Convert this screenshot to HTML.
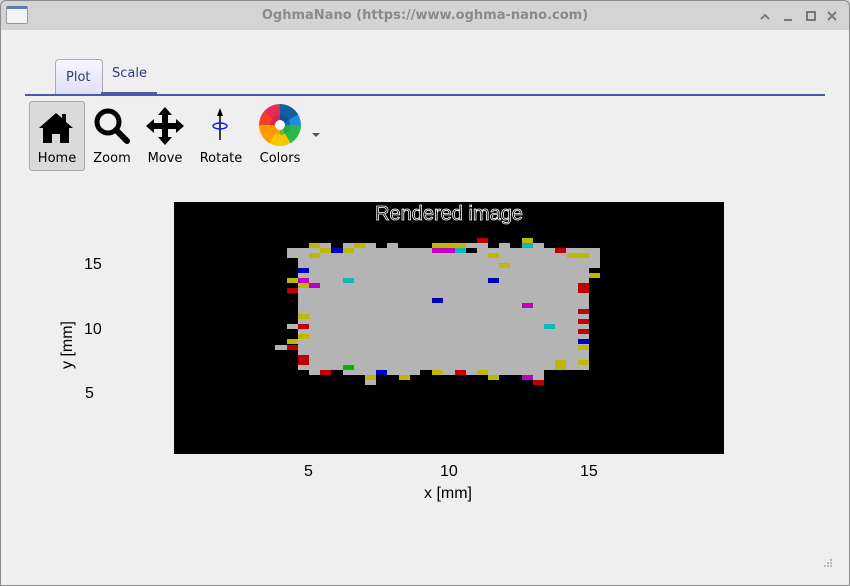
<!DOCTYPE html>
<html><head><meta charset="utf-8"><style>
body{margin:0;width:850px;height:586px;background:#fff;font-family:"DejaVu Sans","Liberation Sans",sans-serif;position:relative;overflow:hidden}
.win{position:absolute;left:0;top:0;width:850px;height:586px;background:#efefef;overflow:hidden}
.frame{position:absolute;left:0;top:0;width:848px;height:584px;border:1px solid #8a8a8a;border-radius:6px 6px 0 0}
.tb{position:absolute;left:0;top:0;width:100%;height:30px;background:#d4d4d4}
.a{position:absolute}
.b{position:absolute;height:5px}
.lbl{position:absolute;font-family:"Liberation Sans",sans-serif;font-size:16px;color:#000}
.tl{position:absolute;font-size:13px;color:#000;text-align:center}
</style></head><body>
<div class="win">
<div class="tb">
 <div class="a" style="left:6px;top:6px;width:20px;height:14px;border:1px solid #999;border-radius:2px;background:#f4f4f4;border-top:3px solid #5a7fb8"></div>
 <div class="a" style="left:0;width:850px;top:8px;text-align:center;font-size:13px;font-weight:bold;color:#8a8a8a">OghmaNano (https://www.oghma-nano.com)</div>
 <svg class="a" style="left:755px;top:8px" width="90" height="16"><g stroke="#777" stroke-width="2" fill="none"><path d="M6 11 L10 7 L14 11"/><path d="M29 12 H37"/><rect x="52" y="4" width="8" height="8"/><path d="M73 4 L81 12 M81 4 L73 12"/></g></svg>
</div>
<div class="a" style="left:55px;top:59px;width:46px;height:34px;border:1px solid #aab;border-bottom:none;border-radius:4px 4px 0 0;background:linear-gradient(#f6f6fc,#dfe2f7)"></div>
<div class="a" style="left:66px;top:70px;font-size:13px;color:#333a80">Plot</div>
<div class="a" style="left:112px;top:66px;font-size:13px;color:#333a80">Scale</div>
<div class="a" style="left:101px;top:92px;width:56px;height:2px;background:#4a58a8"></div>
<div class="a" style="left:25px;top:94px;width:800px;height:2px;background:#4a58a8"></div>
<div class="a" style="left:29px;top:101px;width:54px;height:68px;background:#dadada;border:1px solid #aaa;border-radius:3px"></div>
<svg class="a" style="left:37px;top:110px" width="38" height="36"><path d="M19 3 L2 18 L6 18 L6 33 L15 33 L15 24 L23 24 L23 33 L32 33 L32 18 L36 18 L29 12 L29 4 L25 4 L25 8 Z" fill="#000"/></svg>
<svg class="a" style="left:92px;top:106px" width="40" height="40"><circle cx="16" cy="16" r="11" stroke="#000" stroke-width="5" fill="none"/><path d="M24 24 L35 35" stroke="#000" stroke-width="6" stroke-linecap="round"/></svg>
<svg class="a" style="left:144px;top:106px" width="42" height="40"><path d="M21 1 L28 9 L24 9 L24 17 L32 17 L32 13 L40 20 L32 27 L32 23 L24 23 L24 31 L28 31 L21 39 L14 31 L18 31 L18 23 L10 23 L10 27 L2 20 L10 13 L10 17 L18 17 L18 9 L14 9 Z" fill="#000"/></svg>
<svg class="a" style="left:205px;top:106px" width="30" height="36"><path d="M15 34 V6" stroke="#000" stroke-width="1.5"/><path d="M15 2 L12 10 L18 10 Z" fill="#000"/><ellipse cx="15" cy="20" rx="7" ry="3" stroke="#1a1aff" stroke-width="1.5" fill="none"/></svg>
<div class="a" style="left:259px;top:104px;width:42px;height:42px;border-radius:50%;background:conic-gradient(#0d5fa0 0 60deg,#1e8be0 60deg 90deg,#2bb84a 90deg 150deg,#f5c800 150deg 210deg,#ff9a00 210deg 270deg,#f0402a 270deg 310deg,#e82a5a 310deg 360deg)"></div>
<div class="a" style="left:270px;top:115px;width:20px;height:20px;border-radius:50%;background:conic-gradient(#0a4a85 0 90deg,#1a9a3a 90deg 180deg,#f08c00 180deg 270deg,#d01850 270deg);opacity:.55"></div>
<div class="a" style="left:275px;top:120px;width:10px;height:10px;border-radius:50%;background:#fff"></div>
<div class="a" style="left:312px;top:133px;width:0;height:0;border-left:4px solid transparent;border-right:4px solid transparent;border-top:4px solid #555"></div>
<div class="tl" style="left:29px;top:151px;width:56px">Home</div>
<div class="tl" style="left:88px;top:151px;width:48px">Zoom</div>
<div class="tl" style="left:141px;top:151px;width:48px">Move</div>
<div class="tl" style="left:196px;top:151px;width:50px">Rotate</div>
<div class="tl" style="left:255px;top:151px;width:50px">Colors</div>
<div class="a" style="left:174px;top:202px;width:550px;height:252px;background:#000"></div>
<div class="a" style="left:174px;top:202px;width:550px;text-align:center;font-family:'Liberation Sans',sans-serif;font-size:20px;color:#000;-webkit-text-stroke:0.8px #fff;line-height:24px">Rendered image</div>
<div class="a" style="left:298px;top:248px;width:280px;height:122px;background:#b4b4b4"></div>
<div class="a" style="left:287px;top:248px;width:313px;height:10px;background:#b4b4b4"></div>
<div class="a" style="left:578px;top:258px;width:11px;height:112px;background:#b4b4b4"></div>
<div class="a" style="left:589px;top:258px;width:11px;height:10px;background:#b4b4b4"></div>
<div class="a" style="left:309px;top:370px;width:168px;height:5px;background:#b4b4b4"></div>
<div class="a" style="left:488px;top:370px;width:56px;height:5px;background:#b4b4b4"></div>
<div class="b" style="left:309px;top:243px;width:11px;background:#bdb800"></div>
<div class="b" style="left:320px;top:243px;width:11px;background:#b4b4b4"></div>
<div class="b" style="left:343px;top:243px;width:11px;background:#b4b4b4"></div>
<div class="b" style="left:354px;top:243px;width:11px;background:#bdb800"></div>
<div class="b" style="left:365px;top:243px;width:11px;background:#b4b4b4"></div>
<div class="b" style="left:387px;top:243px;width:11px;background:#b4b4b4"></div>
<div class="b" style="left:432px;top:243px;width:34px;background:#bdb800"></div>
<div class="b" style="left:466px;top:243px;width:22px;background:#b4b4b4"></div>
<div class="b" style="left:499px;top:243px;width:11px;background:#b4b4b4"></div>
<div class="b" style="left:522px;top:243px;width:11px;background:#10b8b8"></div>
<div class="b" style="left:533px;top:243px;width:11px;background:#b4b4b4"></div>
<div class="b" style="left:477px;top:238px;width:11px;background:#c00000"></div>
<div class="b" style="left:522px;top:238px;width:11px;background:#bdb800"></div>
<div class="b" style="left:320px;top:248px;width:11px;background:#bdb800"></div>
<div class="b" style="left:331px;top:248px;width:12px;background:#0000b8"></div>
<div class="b" style="left:343px;top:248px;width:11px;background:#bdb800"></div>
<div class="b" style="left:432px;top:248px;width:23px;background:#c000c0"></div>
<div class="b" style="left:455px;top:248px;width:11px;background:#10b8b8"></div>
<div class="b" style="left:466px;top:248px;width:11px;background:#000"></div>
<div class="b" style="left:555px;top:248px;width:11px;background:#c00000"></div>
<div class="b" style="left:309px;top:253px;width:11px;background:#bdb800"></div>
<div class="b" style="left:488px;top:253px;width:11px;background:#bdb800"></div>
<div class="b" style="left:567px;top:253px;width:22px;background:#bdb800"></div>
<div class="b" style="left:287px;top:258px;width:11px;height:5px;background:#000"></div>
<div class="b" style="left:499px;top:263px;width:11px;background:#bdb800"></div>
<div class="b" style="left:298px;top:268px;width:11px;background:#0000b8"></div>
<div class="b" style="left:589px;top:273px;width:11px;background:#bdb800"></div>
<div class="b" style="left:287px;top:278px;width:11px;background:#bdb800"></div>
<div class="b" style="left:298px;top:278px;width:11px;background:#c000c0"></div>
<div class="b" style="left:343px;top:278px;width:11px;background:#10b8b8"></div>
<div class="b" style="left:488px;top:278px;width:11px;background:#0000b8"></div>
<div class="b" style="left:298px;top:283px;width:11px;background:#bdb800"></div>
<div class="b" style="left:309px;top:283px;width:11px;background:#c000c0"></div>
<div class="b" style="left:578px;top:283px;width:11px;height:10px;background:#c00000"></div>
<div class="b" style="left:287px;top:288px;width:11px;background:#c00000"></div>
<div class="b" style="left:432px;top:298px;width:11px;background:#0000b8"></div>
<div class="b" style="left:522px;top:303px;width:11px;background:#c000c0"></div>
<div class="b" style="left:578px;top:309px;width:11px;background:#c00000"></div>
<div class="b" style="left:298px;top:314px;width:11px;background:#bdb800"></div>
<div class="b" style="left:578px;top:319px;width:11px;background:#c00000"></div>
<div class="b" style="left:287px;top:324px;width:11px;background:#b4b4b4"></div>
<div class="b" style="left:298px;top:324px;width:11px;background:#c00000"></div>
<div class="b" style="left:544px;top:324px;width:11px;background:#10b8b8"></div>
<div class="b" style="left:578px;top:329px;width:11px;background:#c00000"></div>
<div class="b" style="left:298px;top:334px;width:11px;background:#bdb800"></div>
<div class="b" style="left:287px;top:339px;width:11px;background:#bdb800"></div>
<div class="b" style="left:578px;top:339px;width:11px;background:#0000b8"></div>
<div class="b" style="left:275px;top:345px;width:12px;background:#b4b4b4"></div>
<div class="b" style="left:287px;top:345px;width:11px;background:#c00000"></div>
<div class="b" style="left:578px;top:345px;width:11px;background:#bdb800"></div>
<div class="b" style="left:298px;top:355px;width:11px;height:10px;background:#c00000"></div>
<div class="b" style="left:555px;top:360px;width:11px;height:10px;background:#bdb800"></div>
<div class="b" style="left:578px;top:360px;width:11px;background:#bdb800"></div>
<div class="b" style="left:343px;top:365px;width:11px;background:#00b800"></div>
<div class="b" style="left:320px;top:370px;width:11px;background:#c00000"></div>
<div class="b" style="left:331px;top:370px;width:12px;background:#000"></div>
<div class="b" style="left:376px;top:370px;width:11px;background:#0000b8"></div>
<div class="b" style="left:420px;top:370px;width:12px;background:#000"></div>
<div class="b" style="left:432px;top:370px;width:11px;background:#bdb800"></div>
<div class="b" style="left:455px;top:370px;width:11px;background:#c00000"></div>
<div class="b" style="left:477px;top:370px;width:11px;background:#bdb800"></div>
<div class="b" style="left:365px;top:375px;width:11px;background:#bdb800"></div>
<div class="b" style="left:399px;top:375px;width:11px;background:#bdb800"></div>
<div class="b" style="left:488px;top:375px;width:11px;background:#bdb800"></div>
<div class="b" style="left:522px;top:375px;width:11px;background:#c000c0"></div>
<div class="b" style="left:533px;top:375px;width:11px;background:#b4b4b4"></div>
<div class="b" style="left:365px;top:380px;width:11px;background:#b4b4b4"></div>
<div class="b" style="left:533px;top:380px;width:11px;background:#c00000"></div>
<div class="lbl" style="left:84px;top:256px">15</div>
<div class="lbl" style="left:84px;top:321px">10</div>
<div class="lbl" style="left:85px;top:385px">5</div>
<div class="lbl" style="left:304px;top:463px">5</div>
<div class="lbl" style="left:440px;top:463px">10</div>
<div class="lbl" style="left:580px;top:463px">15</div>
<div class="lbl" style="left:424px;top:485px">x [mm]</div>
<div class="lbl" style="left:44px;top:336px;transform:rotate(-90deg)">y [mm]</div>
<svg class="a" style="left:822px;top:557px" width="12" height="12"><g fill="#bbb"><rect x="8" y="2" width="2" height="2"/><rect x="5" y="5" width="2" height="2"/><rect x="8" y="5" width="2" height="2"/><rect x="2" y="8" width="2" height="2"/><rect x="5" y="8" width="2" height="2"/><rect x="8" y="8" width="2" height="2"/></g></svg>
<div class="frame"></div>
</div>
</body></html>
